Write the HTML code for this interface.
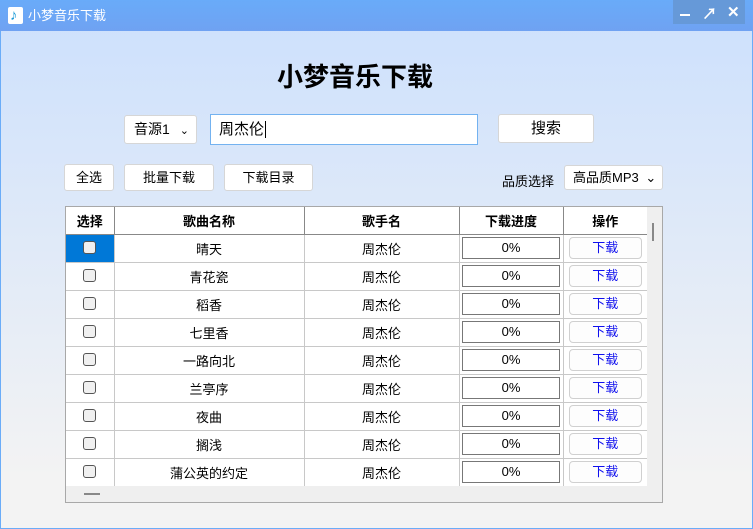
<!DOCTYPE html>
<html><head><meta charset="utf-8"><style>
*{box-sizing:border-box;margin:0;padding:0}
body{width:753px;height:529px;overflow:hidden;font-family:"Liberation Sans","Noto Sans CJK SC",sans-serif;font-size:13px;color:#000;position:relative;background:linear-gradient(#cce0fd,#f3f3f3 90%);}
.abs{position:absolute}
.tb{left:0;top:0;width:753px;height:31px;background:linear-gradient(#69abf9,#6fa2f2);color:#fff;font-size:13px}
.win{left:0;top:31px;width:753px;height:498px;border:1px solid #6aacf8;border-top:none}
.btn{background:#fff;border:1px solid #d6d6d6;border-radius:3px;text-align:center;font-size:13px}
table{border-collapse:collapse;font-size:13px;border-style:hidden}
td,th{border:1px solid #c8c8c8;height:28px;text-align:center;padding:0}
th{font-weight:bold;border-bottom:1px solid #888;border-right:1px solid #888;height:27px}
.cb{display:inline-block;width:13px;height:13px;border:1px solid #555;border-radius:3px;background:#f0f0f0;vertical-align:middle;margin-top:-4px}
.pg{display:block;margin:0 auto;width:98px;height:22px;border:1px solid #777;line-height:20px;background:#fff}
.dl{display:block;margin:0 auto;width:73px;height:22px;border:1px solid #d0d0d0;border-radius:4px;line-height:20px;color:#1010ee;background:#fdfdfd}
</style></head><body>
<div class="abs win"></div>
<div class="abs tb">
 <div class="abs" style="left:8px;top:7px;width:15px;height:17px;background:#fff;border-radius:2px"></div>
 <div class="abs" style="left:10px;top:7px;color:#1a9ad8;font-size:15px;line-height:17px">♪</div>
 <div class="abs" style="left:28px;top:7px;line-height:17px">小梦音乐下载</div>
 <div class="abs" style="left:673px;top:0;width:72px;height:24px;background:#6699d8"></div>
 <div class="abs" style="left:680px;top:14px;width:10px;height:2px;background:#fff"></div>
 <div class="abs" style="left:702px;top:3px;font-size:15px;font-weight:bold">↗</div>
 <div class="abs" style="left:727px;top:3px;font-size:15px;font-weight:bold">✕</div>
</div>
<div class="abs" style="left:0;top:59px;width:710px;text-align:center;font-size:26px;font-weight:bold;line-height:36px">小梦音乐下载</div>
<div class="abs btn" style="left:124px;top:115px;width:73px;height:29px;line-height:27px;text-align:left;padding-left:9px;font-size:14px">音源1 <span style="font-size:11px;margin-left:6px">⌄</span></div>
<div class="abs" style="left:210px;top:114px;width:268px;height:31px;border:1px solid #73b2f0;background:#fff;line-height:29px;padding-left:8px;font-size:15px">周杰伦<span style="border-left:1px solid #000;margin-left:1px"></span></div>
<div class="abs btn" style="left:498px;top:114px;width:96px;height:29px;line-height:27px;font-size:15px">搜索</div>
<div class="abs btn" style="left:64px;top:164px;width:50px;height:27px;line-height:25px">全选</div>
<div class="abs btn" style="left:124px;top:164px;width:90px;height:27px;line-height:25px">批量下载</div>
<div class="abs btn" style="left:224px;top:164px;width:89px;height:27px;line-height:25px">下载目录</div>
<div class="abs" style="left:502px;top:171px">品质选择</div>
<div class="abs btn" style="left:564px;top:165px;width:99px;height:25px;line-height:23px;text-align:left;padding-left:8px">高品质MP3 <span style="margin-left:3px">⌄</span></div>
<div class="abs" style="left:65px;top:206px;width:598px;height:297px;border:1px solid #a8a8a8;background:#efefef;overflow:hidden">
<table style="background:#fff;width:581px">
<tr><th style="width:48px">选择</th><th style="width:190px">歌曲名称</th><th style="width:155px">歌手名</th><th style="width:104px">下载进度</th><th style="width:84px">操作</th></tr>
<tr><td style="background:#0078d7"><span class="cb"></span></td><td>晴天</td><td>周杰伦</td><td><span class="pg">0%</span></td><td><span class="dl">下载</span></td></tr>
<tr><td><span class="cb"></span></td><td>青花瓷</td><td>周杰伦</td><td><span class="pg">0%</span></td><td><span class="dl">下载</span></td></tr>
<tr><td><span class="cb"></span></td><td>稻香</td><td>周杰伦</td><td><span class="pg">0%</span></td><td><span class="dl">下载</span></td></tr>
<tr><td><span class="cb"></span></td><td>七里香</td><td>周杰伦</td><td><span class="pg">0%</span></td><td><span class="dl">下载</span></td></tr>
<tr><td><span class="cb"></span></td><td>一路向北</td><td>周杰伦</td><td><span class="pg">0%</span></td><td><span class="dl">下载</span></td></tr>
<tr><td><span class="cb"></span></td><td>兰亭序</td><td>周杰伦</td><td><span class="pg">0%</span></td><td><span class="dl">下载</span></td></tr>
<tr><td><span class="cb"></span></td><td>夜曲</td><td>周杰伦</td><td><span class="pg">0%</span></td><td><span class="dl">下载</span></td></tr>
<tr><td><span class="cb"></span></td><td>搁浅</td><td>周杰伦</td><td><span class="pg">0%</span></td><td><span class="dl">下载</span></td></tr>
<tr><td><span class="cb"></span></td><td>蒲公英的约定</td><td>周杰伦</td><td><span class="pg">0%</span></td><td><span class="dl">下载</span></td></tr>
</table>
<div class="abs" style="left:18px;top:286px;width:16px;height:2px;background:#888"></div>
<div class="abs" style="left:586px;top:16px;width:2px;height:18px;background:#888"></div>
</div>
</body></html>
